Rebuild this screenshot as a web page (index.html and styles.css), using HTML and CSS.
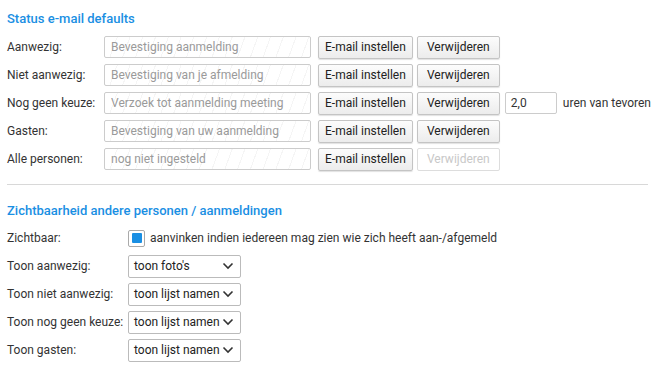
FILE: index.html
```html
<!DOCTYPE html>
<html lang="nl">
<head>
    <meta charset="UTF-8">
    <meta name="viewport" content="width=device-width, initial-scale=1.0">
    <title>Status e-mail defaults</title>
    <link rel="stylesheet" href="styles.css">
</head>
<body>
    <h2 class="section-title">Status e-mail defaults</h2>

    <div class="mail-rows">
        <div class="mail-row">
            <label class="row-label">Aanwezig:</label>
            <input class="mail-input" type="text" readonly placeholder="Bevestiging aanmelding">
            <button class="btn">E-mail instellen</button>
            <button class="btn btn-remove">Verwijderen</button>
        </div>
        <div class="mail-row">
            <label class="row-label">Niet aanwezig:</label>
            <input class="mail-input" type="text" readonly placeholder="Bevestiging van je afmelding">
            <button class="btn">E-mail instellen</button>
            <button class="btn btn-remove">Verwijderen</button>
        </div>
        <div class="mail-row">
            <label class="row-label">Nog geen keuze:</label>
            <input class="mail-input" type="text" readonly placeholder="Verzoek tot aanmelding meeting">
            <button class="btn">E-mail instellen</button>
            <button class="btn btn-remove">Verwijderen</button>
            <input class="hours-input" type="text" value="2,0">
            <span class="hours-text">uren van tevoren</span>
        </div>
        <div class="mail-row">
            <label class="row-label">Gasten:</label>
            <input class="mail-input" type="text" readonly placeholder="Bevestiging van uw aanmelding">
            <button class="btn">E-mail instellen</button>
            <button class="btn btn-remove">Verwijderen</button>
        </div>
        <div class="mail-row">
            <label class="row-label">Alle personen:</label>
            <input class="mail-input" type="text" readonly placeholder="nog niet ingesteld">
            <button class="btn">E-mail instellen</button>
            <button class="btn btn-remove" disabled>Verwijderen</button>
        </div>
    </div>

    <hr class="divider">

    <h2 class="section-title second">Zichtbaarheid andere personen / aanmeldingen</h2>

    <div class="vis-rows">
        <div class="vis-row">
            <label class="vis-label">Zichtbaar:</label>
            <span class="check"><span class="check-mark"></span></span>
            <span class="check-text">aanvinken indien iedereen mag zien wie zich heeft aan-/afgemeld</span>
        </div>
        <div class="vis-row">
            <label class="vis-label">Toon aanwezig:</label>
            <div class="select"><span>toon foto's</span><svg width="12" height="8" viewBox="0 0 12 8"><path d="M1.5 1.5 L6 6 L10.5 1.5" fill="none" stroke="#333" stroke-width="1.6"/></svg></div>
        </div>
        <div class="vis-row">
            <label class="vis-label">Toon niet aanwezig:</label>
            <div class="select"><span>toon lijst namen</span><svg width="12" height="8" viewBox="0 0 12 8"><path d="M1.5 1.5 L6 6 L10.5 1.5" fill="none" stroke="#333" stroke-width="1.6"/></svg></div>
        </div>
        <div class="vis-row">
            <label class="vis-label">Toon nog geen keuze:</label>
            <div class="select"><span>toon lijst namen</span><svg width="12" height="8" viewBox="0 0 12 8"><path d="M1.5 1.5 L6 6 L10.5 1.5" fill="none" stroke="#333" stroke-width="1.6"/></svg></div>
        </div>
        <div class="vis-row">
            <label class="vis-label">Toon gasten:</label>
            <div class="select"><span>toon lijst namen</span><svg width="12" height="8" viewBox="0 0 12 8"><path d="M1.5 1.5 L6 6 L10.5 1.5" fill="none" stroke="#333" stroke-width="1.6"/></svg></div>
        </div>
    </div>
</body>
</html>
```

FILE: styles.css
```css
body {
    font-family: Roboto, "Liberation Sans", sans-serif;
    font-size: 12px;
    color: #333;
    margin: 0;
    padding: 0 8px 0 7px;
}

.section-title {
    color: #1a8fe3;
    font-size: 13px;
    font-weight: 500;
    margin: 11px 0 0 0;
    line-height: 16px;
}

.section-title.second {
    margin-top: 18px;
}

.mail-rows {
    margin-top: 9px;
}

.mail-row {
    display: flex;
    align-items: center;
    height: 22px;
    margin-bottom: 6px;
    white-space: nowrap;
}

.mail-row > * {
    flex-shrink: 0;
}

.row-label {
    width: 97px;
}

.mail-input {
    width: 207px;
    height: 22px;
    box-sizing: border-box;
    border: 1px solid #ccc;
    border-radius: 2px;
    padding: 0 6px;
    font: inherit;
    margin: 0 7px 0 0;
    background: repeating-linear-gradient(110deg, #fff 0 11px, #f5f5f5 11px 12px);
}

.mail-input::placeholder {
    color: #9a9a9a;
}

.btn {
    height: 23px;
    box-sizing: border-box;
    font: inherit;
    color: #222;
    padding: 0 6px;
    margin: 0 4px 0 0;
    border: 1px solid #c4c4c4;
    border-radius: 2px;
    background: linear-gradient(#fcfcfc, #ececec);
    box-shadow: 0 1px 1px rgba(0, 0, 0, 0.12);
    white-space: nowrap;
    cursor: pointer;
}

.btn-remove {
    width: 83px;
}

.btn:disabled {
    background: #fff;
    color: #c8c8c8;
    border-color: #ddd;
    box-shadow: none;
}

.hours-input {
    width: 52px;
    height: 22px;
    box-sizing: border-box;
    border: 1px solid #ccc;
    border-radius: 2px;
    padding: 0 5px;
    font: inherit;
    color: #333;
    margin: 0 6px 0 1px;
}

.divider {
    border: 0;
    border-top: 1px solid #d8d8d8;
    margin: 14px 0 0 0;
}

.vis-rows {
    margin-top: 8px;
}

.vis-row {
    display: flex;
    align-items: center;
    height: 22px;
    margin-bottom: 6px;
    white-space: nowrap;
}

.vis-row > * {
    flex-shrink: 0;
}

.vis-label {
    width: 121px;
}

.check {
    width: 17px;
    height: 17px;
    box-sizing: border-box;
    border: 1px solid #aaa;
    border-radius: 2px;
    display: flex;
    align-items: center;
    justify-content: center;
    margin-right: 5px;
}

.check-mark {
    width: 10px;
    height: 10px;
    background: #1a8fe3;
    border-radius: 1px;
}

.select {
    width: 113px;
    height: 23px;
    box-sizing: border-box;
    border: 1px solid #bbb;
    border-radius: 2px;
    display: flex;
    align-items: center;
    justify-content: space-between;
    padding: 0 6px 0 5px;
    color: #222;
}
```
